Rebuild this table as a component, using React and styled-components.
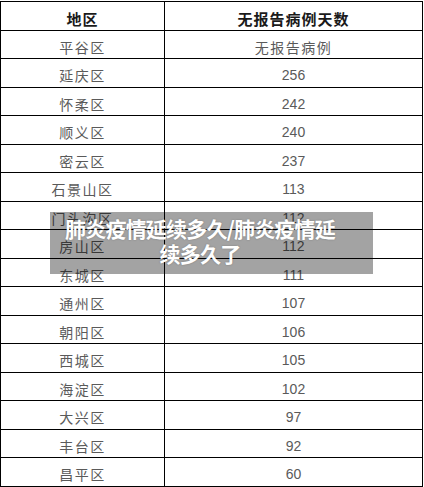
import React from "react";
import styled, { createGlobalStyle } from "styled-components";

const Global = createGlobalStyle`
  html, body { margin: 0; padding: 0; background: #fff; }
  body { font-family: "Noto Sans CJK SC", "Noto Sans", sans-serif; }
`;

const Page = styled.div`
  position: relative;
  width: 424px;
  height: 487px;
  padding-top: 1px;
  box-sizing: border-box;
  overflow: hidden;
`;

const Table = styled.div`
  display: grid;
  grid-template-columns: 164px 257px;
  grid-auto-rows: 28.5px;
  width: 423px;
  box-sizing: border-box;
  border: 1px solid #000;
  border-bottom: none;
`;

const Cell = styled.div`
  display: flex;
  align-items: center;
  justify-content: center;
  box-sizing: border-box;
  padding-top: 5px;
  border-bottom: 1px solid #000;
  border-right: ${(p) => (p.$first ? "1px solid #000" : "none")};
  font-family: ${(p) =>
    p.$num ? '"Liberation Sans", Arial, sans-serif' : '"Noto Sans CJK SC", sans-serif'};
  font-size: ${(p) => (p.$head ? "15px" : "14px")};
  font-weight: ${(p) => (p.$head ? 700 : 400)};
  letter-spacing: ${(p) => (p.$head ? "1px" : p.$num ? "0" : "1.5px")};
  color: ${(p) => (p.$head ? "#1a1a1a" : "#5a5a5a")};
  white-space: nowrap;
`;

const Banner = styled.div`
  position: absolute;
  left: 50px;
  top: 212px;
  width: 323px;
  height: 62px;
  box-sizing: border-box;
  padding: 4px 27px 0 4px;
  background: rgba(0, 0, 0, 0.36);
  color: #fff;
  font-family: "Noto Sans CJK SC", sans-serif;
  font-weight: 700;
  font-size: 21px;
  letter-spacing: -0.8px;
  line-height: 25px;
  text-align: center;
  white-space: nowrap;
  text-shadow: 0 0 2px rgba(0, 0, 0, 0.25);
`;

const rows = [
  ["平谷区", "无报告病例"],
  ["延庆区", "256"],
  ["怀柔区", "242"],
  ["顺义区", "240"],
  ["密云区", "237"],
  ["石景山区", "113"],
  ["门头沟区", "112"],
  ["房山区", "112"],
  ["东城区", "111"],
  ["通州区", "107"],
  ["朝阳区", "106"],
  ["西城区", "105"],
  ["海淀区", "102"],
  ["大兴区", "97"],
  ["丰台区", "92"],
  ["昌平区", "60"],
];

export default function App() {
  return (
    <>
      <Global />
      <Page>
        <Table>
          <Cell $first $head>地区</Cell>
          <Cell $head>无报告病例天数</Cell>
          {rows.map(([d, v]) => (
            <React.Fragment key={d}>
              <Cell $first>{d}</Cell>
              <Cell $num={/^\d+$/.test(v)}>{v}</Cell>
            </React.Fragment>
          ))}
        </Table>
        <Banner>
          肺炎疫情延续多久/肺炎疫情延
          <br />
          续多久了
        </Banner>
      </Page>
    </>
  );
}
